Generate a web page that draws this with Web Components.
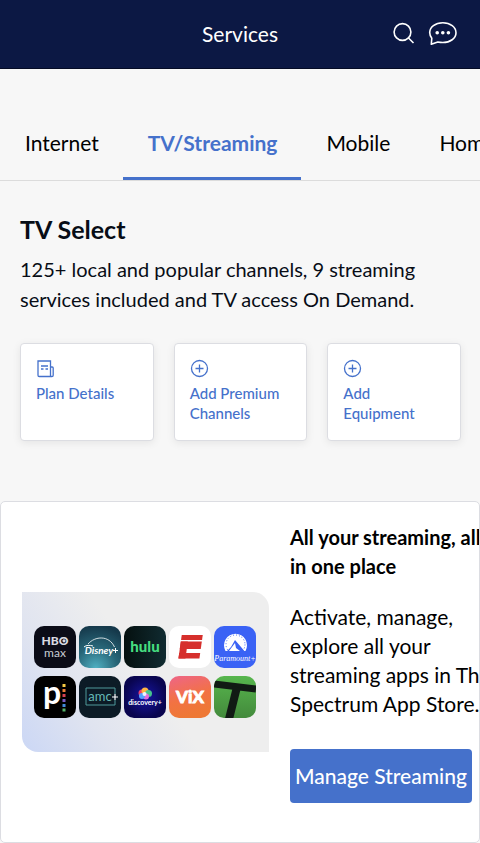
<!DOCTYPE html>
<html lang="en">
<head>
<meta charset="utf-8">
<meta name="viewport" content="width=device-width, initial-scale=1">
<title>Services</title>
<style>
  :root {
    --navy: #0c1844;
    --blue: #4571cb;
    --ink: #080d16;
    --page: #f7f7f7;
  }

  body {
    margin: 0;
    background: var(--page);
    color: var(--ink);
    font-family: Lato, "Open Sans", sans-serif;
    font-size: 20px;
    line-height: 30px;
    overflow-x: hidden;
  }
</style>
</head>
<body>
<services-page></services-page>

<script>
class AppHeader extends HTMLElement {
  constructor() {
    super();
    this.attachShadow({ mode: "open" });
  }

  connectedCallback() {
    this.shadowRoot.innerHTML = `
    <style>
    :host { display: block; }

    header {
      display: grid;
      grid-template-columns: 1fr auto 1fr;
      align-items: center;
      height: 68px;
      padding: 0 22px;
      background: var(--navy);
      border-bottom: 1px solid #050b25;
      color: white;
    }

    h1 {
      grid-column: 2;
      margin: 0;
      font-size: 21px;
      font-weight: normal;
    }

    .actions {
      display: flex;
      justify-content: flex-end;
      align-items: center;
      gap: 12px;
    }

    button {
      display: flex;
      padding: 0;
      border: 0;
      background: none;
      color: inherit;
      cursor: pointer;
    }

    svg {
      fill: none;
      stroke: currentColor;
      stroke-width: 1.6;
      stroke-linejoin: round;
    }
    </style>

    <header>
      <h1><slot></slot></h1>
      <div class="actions">
        <button type="button" aria-label="Search">
          <svg width="24" height="26" viewBox="0 0 24 26"><circle cx="10.500" cy="11" r="8.4"/><path d="M16.500 17l5 5"/></svg>
        </button>
        <button type="button" aria-label="Chat">
          <svg width="30" height="26" viewBox="0 0 30 26">
            <path d="M3.800 17.200C2.400 15.500 1.700 13.600 1.700 11.600 1.700 6 7.300 1.800 14.800 1.800S28 6 28 11.700 22.200 21.500 14.800 21.500c-1.800 0-3.500-.2-5-.5L3.300 23.200z"/>
            <g fill="currentColor" stroke="none"><circle cx="9.200" cy="11.700" r="1.800"/><circle cx="14.800" cy="11.700" r="1.800"/><circle cx="20.400" cy="11.700" r="1.800"/></g>
          </svg>
        </button>
      </div>
    </header>
    `;
  }
}

class TabBar extends HTMLElement {
  constructor() {
    super();
    this.attachShadow({ mode: "open" });
  }

  connectedCallback() {
    this.shadowRoot.innerHTML = `
    <style>
    :host { display: block; }

    nav {
      display: flex;
      margin-top: 37px;
      overflow: hidden;
      border-bottom: 1px solid #dcdcdc;
    }
    </style>

    <nav aria-label="Services"><slot></slot></nav>
    `;
  }
}

class TabLink extends HTMLElement {
  constructor() {
    super();
    this.attachShadow({ mode: "open" });
  }

  connectedCallback() {
    this.shadowRoot.innerHTML = `
    <style>
    :host { display: block; flex: none; }

    a {
      display: block;
      padding: 22px 24px 19px 25px;
      border-bottom: 3px solid transparent;
      color: black;
      font-size: 21px;
      text-decoration: none;
      white-space: nowrap;
    }

    :host([active]) a {
      color: var(--blue);
      border-color: var(--blue);
      font-weight: bold;
    }
    </style>

    <a href="#"><slot></slot></a>
    `;
  }
}

const ACTION_ICONS = {
  plan: `<path d="M2 2h12.500v15.500H3.200a1.200 1.200 0 0 1-1.200-1.200zM14.500 8h1.700a1 1 0 0 1 1 1v7.200a1.300 1.300 0 0 1-1.300 1.300h-1.400M5 7h7M5 10h2.500M9.500 10H12"/>`,
  add: `<circle cx="9.500" cy="9.500" r="8"/><path d="M9.500 5.500v8M5.500 9.500h8"/>`
};

class ActionCard extends HTMLElement {
  constructor() {
    super();
    this.attachShadow({ mode: "open" });
  }

  connectedCallback() {
    this.shadowRoot.innerHTML = `
    <style>
    :host { display: block; }

    a {
      display: block;
      box-sizing: border-box;
      height: 100%;
      min-height: 98px;
      padding: 15px;
      background: white;
      border: 1px solid #dcdde2;
      border-radius: 4px;
      box-shadow: 0 2px 8px rgba(0, 0, 0, .08);
      color: var(--blue);
      font-size: 15px;
      line-height: 20px;
      font-weight: 500;
      text-decoration: none;
    }

    svg {
      display: block;
      margin-bottom: 5px;
      fill: none;
      stroke: currentColor;
      stroke-width: 1.3;
    }
    </style>

    <a href="#">
      <svg width="19" height="19" viewBox="0 0 19 19">${ACTION_ICONS[this.getAttribute("icon")]}</svg>
      <slot></slot>
    </a>
    `;
  }
}

// each tile is drawn on a 42 x 42 field
const APPS = {
  hbo: `<rect width="42" height="42" fill="#0b0c17"/>
    <text x="21" y="19" font-size="12" font-weight="900" fill="#d9dbe2">HBO</text>
    <circle cx="30" cy="14.800" r="1.600" fill="#d9dbe2"/>
    <text x="21" y="31" font-size="12" fill="#c9ccd4">max</text>`,
  disney: `<defs><radialGradient id="d" cx=".4" cy="1" r="1"><stop offset="0" stop-color="#4fb0c2"/><stop offset=".5" stop-color="#286678"/><stop offset="1" stop-color="#15394b"/></radialGradient></defs>
    <rect width="42" height="42" fill="url(#d)"/>
    <path d="M9 18C16 10 30 9 35.500 21" fill="none" stroke="white" stroke-width=".8"/>
    <path d="M5 21c2-2 6-2 9-1" fill="none" stroke="white"/>
    <text x="20" y="28" font-size="10" font-weight="bold" font-style="italic" fill="white">Disney</text>
    <path d="M34 24.500h5M36.500 22v5" stroke="white"/>`,
  hulu: `<defs><linearGradient id="h"><stop offset="0" stop-color="#05100f"/><stop offset="1" stop-color="#102b31"/></linearGradient></defs>
    <rect width="42" height="42" fill="url(#h)"/><text x="21" y="26" font-size="15" font-weight="900" fill="#46dd80">hulu</text>`,
  espn: `<rect width="42" height="42" fill="white"/>
    <g fill="#d62f2c" transform="translate(4) skewX(-8)">
      <rect x="10" y="9" width="21" height="5"/>
      <rect x="10" y="15.500" width="7" height="17"/>
      <rect x="10" y="15.500" width="21" height="7.500"/>
      <rect x="10" y="27" width="21" height="5.500"/>
    </g>`,
  paramount: `<rect width="42" height="42" fill="#3a62f5"/>
    <path d="M11.500 25A11.500 11.500 0 1 1 31.500 25z" fill="white"/><circle cx="21.500" cy="18.500" r="9.500" fill="none" stroke="#3a62f5" stroke-width="1" stroke-dasharray="1 2"/>
    <path d="M11 27l6-6 4-7 6 7 5 6z" fill="#3a62f5"/><path d="M15 25l6-8 1 5 4 3z" fill="white"/>
    <text x="21" y="35" font-family="Liberation Serif, serif" font-size="8" font-style="italic" fill="white">Paramount+</text>`,
  peacock: `<rect width="42" height="42" fill="black"/>
    <text x="18" y="28" font-size="32" font-weight="bold" fill="white">p</text>
    <rect x="28.500" y="8" width="3" height="3" fill="#f5ca43"/><rect x="28.500" y="13" width="3" height="3" fill="#ec7d35"/><rect x="28.500" y="18" width="3" height="3" fill="#d84252"/><rect x="28.500" y="23" width="3" height="3" fill="#785bc1"/><rect x="28.500" y="28" width="3" height="3" fill="#438bdb"/><rect x="28.500" y="32.500" width="3" height="3" fill="#55b16a"/>`,
  amc: `<rect width="42" height="42" fill="#0c1b26"/>
    <path d="M36 18v-6H7v17h29v-5" fill="none" stroke="#4e9a9a" stroke-width="1"/>
    <text x="21" y="25" font-size="13" fill="#65b9b6">amc</text><path d="M33 21h6M36 18v6" stroke="white" stroke-width="1.2"/>`,
  discovery: `<defs><radialGradient id="y"><stop offset="0" stop-color="#1715a2"/><stop offset="1" stop-color="#09054f"/></radialGradient></defs>
    <rect width="42" height="42" fill="url(#y)"/>
    <circle cx="18" cy="17" r="3.500" fill="#ed3e68"/><circle cx="21" cy="15" r="3.500" fill="#ffb443"/><circle cx="24.500" cy="17.500" r="3.500" fill="#46c38c"/><circle cx="22" cy="20.500" r="3" fill="#e76adc"/><circle cx="18" cy="20" r="3" fill="#55a2ff"/><circle cx="20.500" cy="18" r="2" fill="#eef2ff"/>
    <text x="21" y="29" font-size="7" font-weight="bold" fill="white">discovery+</text>`,
  vix: `<defs><linearGradient id="v" x2=".3" y2="1"><stop offset="0" stop-color="#ee6588"/><stop offset=".6" stop-color="#f27243"/><stop offset="1" stop-color="#ee7835"/></linearGradient></defs>
    <rect width="42" height="42" fill="url(#v)"/>
    <text x="21" y="27" font-size="17" font-weight="900" fill="white" stroke="white" stroke-width=".8">ViX</text>`,
  ticker: `<defs><linearGradient id="t" x2="0" y2="1"><stop offset="0" stop-color="#57b64d"/><stop offset="1" stop-color="#438a3c"/></linearGradient></defs>
    <rect width="42" height="42" fill="url(#t)"/>
    <path d="M0 8l42 5" stroke="#111a14" stroke-width="7"/><path d="M23 11l-8 32" stroke="#111a14" stroke-width="8"/>`
};

class AppTile extends HTMLElement {
  constructor() {
    super();
    this.attachShadow({ mode: "open" });
  }

  connectedCallback() {
    this.shadowRoot.innerHTML = `
    <style>
    :host { display: block; }
    svg { display: block; width: 100%; border-radius: 10px; }
    text { text-anchor: middle; }
    </style>

    <svg viewBox="0 0 42 42" aria-hidden="true">${APPS[this.getAttribute("app")]}</svg>
    `;
  }
}

class PromoCard extends HTMLElement {
  constructor() {
    super();
    this.attachShadow({ mode: "open" });
  }

  connectedCallback() {
    const tiles = Object.keys(APPS).map((app) => `<app-tile app="${app}"></app-tile>`).join("");

    this.shadowRoot.innerHTML = `
    <style>
    :host { display: block; }

    article {
      display: flex;
      align-items: center;
      gap: 21px;
      padding: 0 21px;
      overflow: hidden;
      background: white;
      border: 1px solid #dcdde2;
      border-radius: 5px;
      color: black;
      font-size: 21px;
      line-height: 29px;
    }

    .art {
      flex: none;
      display: grid;
      grid-template-columns: repeat(5, 42px);
      gap: 8px 3px;
      padding: 34px 13px 34px 12px;
      border-radius: 0 16px 0 16px;
      background: linear-gradient(55deg, #cbd7f5, #e0e4f0 25%, #eee 50%);
    }

    .copy {
      flex: 1 0 208px;
      padding: 21px 0 39px;
    }

    h3 { margin: 0 0 21px; font-size: 20px; }
    p { max-width: 208px; margin: 0 0 31px; }

    button {
      display: block;
      padding: 12px 5px;
      border: 0;
      border-radius: 4px;
      background: var(--blue);
      color: white;
      font: inherit;
      font-weight: 500;
      line-height: 30px;
      white-space: nowrap;
      cursor: pointer;
    }
    </style>

    <article>
      <div class="art">${tiles}</div>
      <div class="copy">
        <h3><slot name="title"></slot></h3>
        <p><slot></slot></p>
        <button type="button"><slot name="action"></slot></button>
      </div>
    </article>
    `;
  }
}

class ServicesPage extends HTMLElement {
  constructor() {
    super();
    this.attachShadow({ mode: "open" });
  }

  connectedCallback() {
    this.shadowRoot.innerHTML = `
    <style>
    :host { display: block; }
    .plan { padding: 33px 19px 0 20px; }
    h2 { margin: 0 0 10px; font-size: 25px; }
    p { margin: 0; }

    .actions {
      display: grid;
      grid-template-columns: repeat(3, 1fr);
      gap: 20px;
      margin: 29px 0 60px;
    }
    </style>

    <app-header>Services</app-header>
    <tab-bar>
      <tab-link>Internet</tab-link>
      <tab-link active>TV/Streaming</tab-link>
      <tab-link>Mobile</tab-link>
      <tab-link>Home</tab-link>
    </tab-bar>
    <main>
      <section class="plan">
        <h2>TV Select</h2>
        <p>125+ local and popular channels, 9 streaming services included and TV access On Demand.</p>
        <div class="actions">
          <action-card icon="plan">Plan Details</action-card>
          <action-card icon="add">Add Premium Channels</action-card>
          <action-card icon="add">Add Equipment</action-card>
        </div>
      </section>
      <promo-card>
        <span slot="title">All your streaming, all<br>in one place</span>
        Activate, manage, explore all your streaming apps in The Spectrum App Store.
        <span slot="action">Manage Streaming</span>
      </promo-card>
    </main>
    `;
  }
}

customElements.define("app-header", AppHeader);
customElements.define("tab-bar", TabBar);
customElements.define("tab-link", TabLink);
customElements.define("action-card", ActionCard);
customElements.define("app-tile", AppTile);
customElements.define("promo-card", PromoCard);
customElements.define("services-page", ServicesPage);
</script>
</body>
</html>
